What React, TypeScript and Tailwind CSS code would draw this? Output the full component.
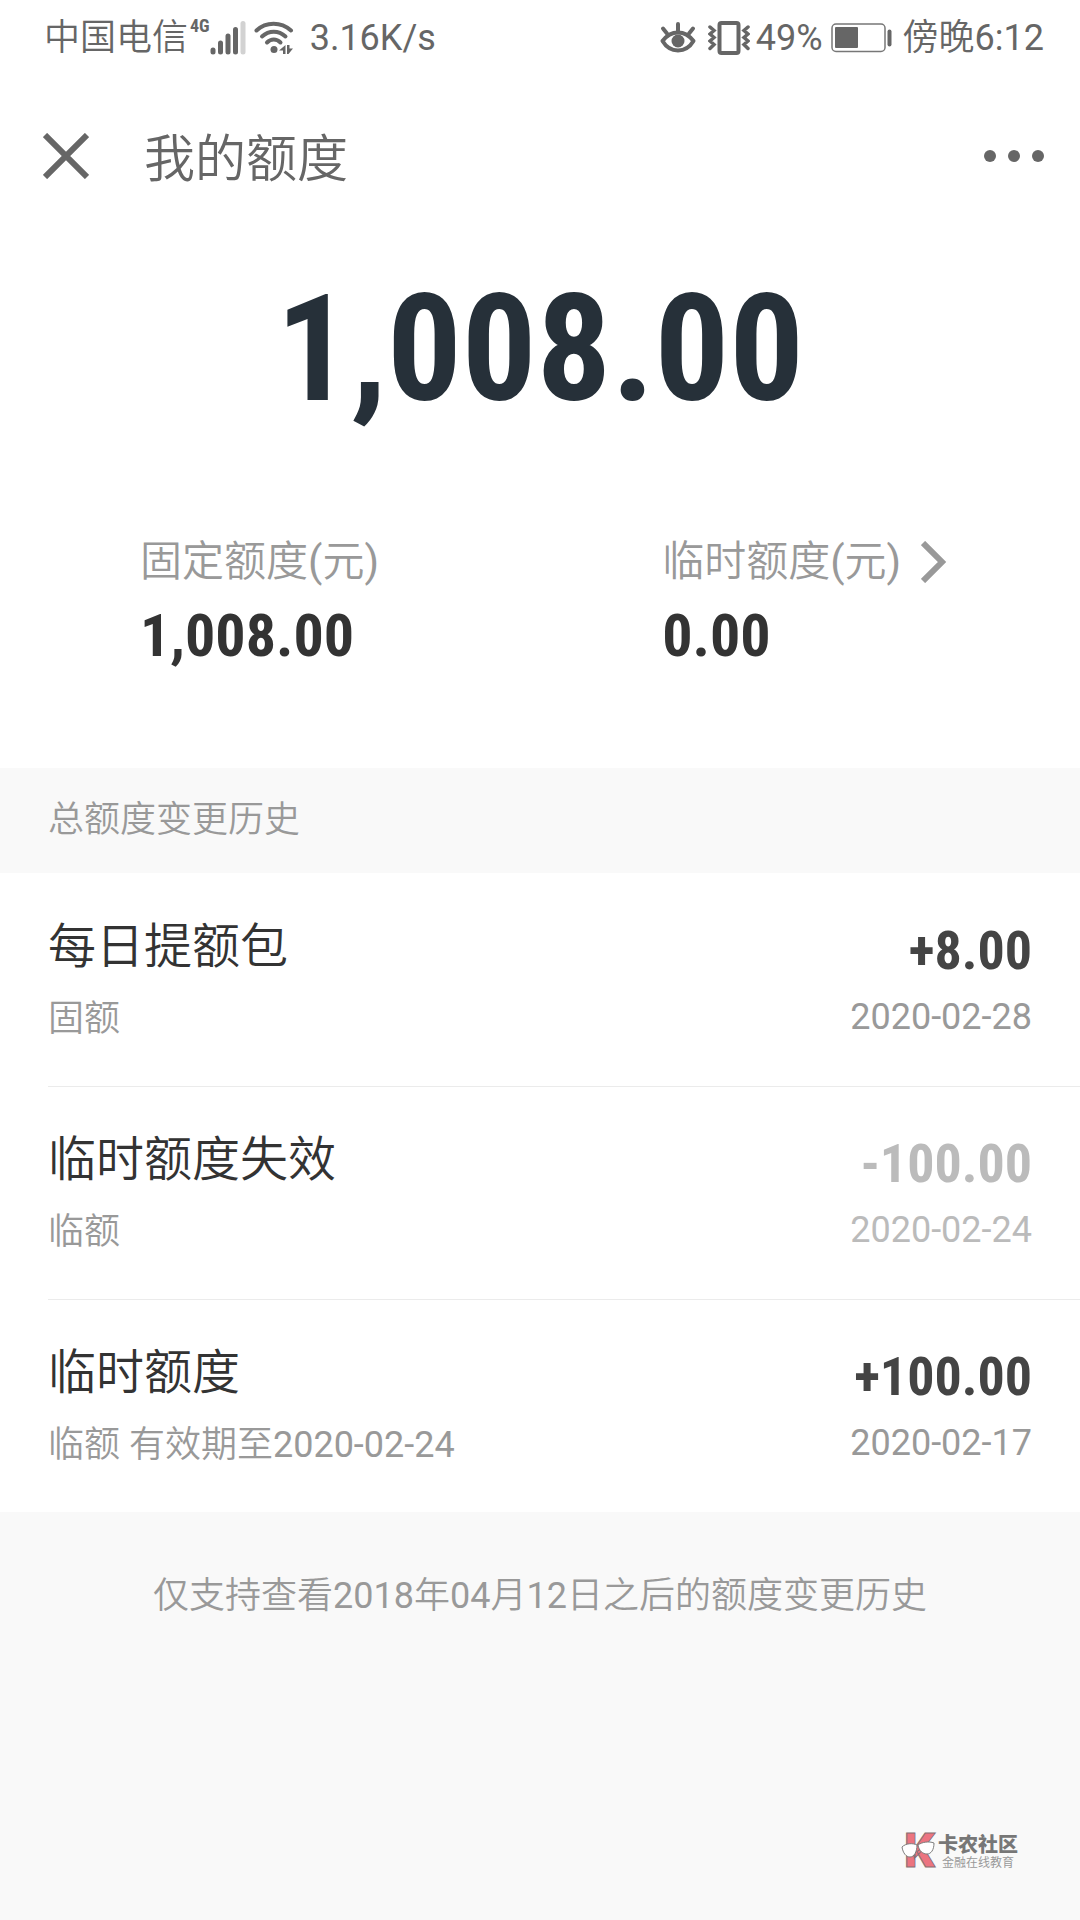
import React from 'react';

type Change = {
  title: string;
  note: string;
  amount: string;
  date: string;
  expired?: boolean;
};

const changes: Change[] = [
  { title: '每日提额包', note: '固额', amount: '+8.00', date: '2020-02-28' },
  { title: '临时额度失效', note: '临额', amount: '-100.00', date: '2020-02-24', expired: true },
  { title: '临时额度', note: '临额 有效期至2020-02-24', amount: '+100.00', date: '2020-02-17' },
];

const SignalIcon = () => (
  <svg className="h-[34px] w-[36px]" viewBox="0 0 36 34" strokeWidth={5} strokeLinecap="round" aria-hidden="true">
    <g stroke="#666666">
      <path d="M3 29v2" />
      <path d="M10.5 22v9" />
      <path d="M18 15v16" />
      <path d="M25.5 8.5v22.5" />
    </g>
    <path d="M33 2.5v28.5" stroke="#d2d2d2" />
  </svg>
);

const WifiIcon = () => (
  <svg className="h-[34px] w-[40px]" viewBox="0 0 40 34" fill="none" aria-hidden="true">
    <g stroke="#666666" strokeWidth={4} strokeLinecap="round">
      <path d="M2.5 9.5C12 .5 27 .5 37 9.5" />
      <path d="M8 15.5C15 9 24.5 9 31.5 15.5" />
      <path d="M13 21.5C17 17.5 22.5 17.5 26.5 21.5" />
    </g>
    <g fill="#666666">
      <circle cx="20" cy="28.5" r="3.5" />
      <path d="M31.5 24v9H29v-3.5h-4z" />
      <path d="M33 24v9h1.5l4.500-5.500h-3.500V24z" />
    </g>
  </svg>
);

const EyeIcon = () => (
  <svg className="h-[34px] w-[36px]" viewBox="0 0 36 34" fill="none" stroke="#666666" strokeLinecap="round" aria-hidden="true">
    <path d="M2.5 20C11 8.5 25 8.5 33.5 20C26 32.5 10 32.5 2.5 20z" strokeWidth={4} strokeLinejoin="round" />
    <path d="M18 3v7M3 7.5l4 5M33 7.5l-4 5" strokeWidth={4} />
    <circle cx="18" cy="20" r="6.5" fill="#666666" stroke="none" />
  </svg>
);

const VibrateIcon = () => (
  <svg className="h-[34px] w-[42px]" viewBox="0 0 42 34" fill="none" stroke="#666666" aria-hidden="true">
    <rect x="11.5" y="2" width="19" height="30" rx="2" strokeWidth={4} />
    <path
      d="M2 6l4 3.5-4 3.5 4 3.5-4 3.5 4 3.5-4 4M40 6l-4 3.5 4 3.5-4 3.5 4 3.5-4 3.5 4 4"
      strokeWidth={3.5}
      strokeLinecap="round"
    />
  </svg>
);

const BatteryIcon = () => (
  <svg className="h-[30px] w-[62px]" viewBox="0 0 62 30" aria-hidden="true">
    <rect x="1" y="1" width="53" height="27.5" rx="4" fill="none" stroke="#777777" strokeWidth={1.5} />
    <rect x="4" y="4" width="23" height="21" rx="1" fill="#666666" />
    <rect x="56.5" y="6.5" width="4" height="17" rx="2" fill="#666666" />
  </svg>
);

const StatusBar = () => (
  <div className="flex h-[76px] items-center justify-between pr-9 pl-11 text-4xl text-[#666666]">
    <div className="flex items-center">
      <span>中国电信</span>
      <span className="ml-0.5 self-start font-['Roboto_Condensed',Roboto,sans-serif] text-lg leading-4 font-bold">4G</span>
      <SignalIcon />
      <span className="mr-4 ml-2">
        <WifiIcon />
      </span>
      <span>3.16K/s</span>
    </div>
    <div className="flex items-center">
      <EyeIcon />
      <span className="mr-1.5 ml-3">
        <VibrateIcon />
      </span>
      <span>49%</span>
      <span className="mr-2.5 ml-2">
        <BatteryIcon />
      </span>
      <span>傍晚6:12</span>
    </div>
  </div>
);

const Watermark = () => (
  <div className="flex items-center font-['Noto_Sans_CJK_SC',sans-serif] text-[#999999]">
    <svg className="h-[60px] w-[37px]" viewBox="0 0 37 60" aria-hidden="true">
      <text x="3" y="47" fontFamily="Roboto, sans-serif" fontWeight="900" fontSize="48" fill="#ec7480" stroke="#857073" strokeWidth="1">
        K
      </text>
      <g fill="#ffffff" stroke="#7d7d7d" strokeWidth="1">
        <path d="M1 27c4-4 11-4 15-2 0 7-3 12-7 12s-7-4-8-10z" />
        <path d="M17 25c4-3 11-4 16-2 0 7-3 11-7 11s-8-3-9-9z" />
      </g>
    </svg>
    <div>
      <p className="text-xl leading-6 font-black text-[#777777]">卡农社区</p>
      <p className="pl-1 text-xs leading-3">金融在线教育</p>
    </div>
  </div>
);

const App: React.FC = () => {
  return (
    <div className="flex min-h-screen flex-col bg-[#f9f9f9] font-[Roboto,'Noto_Sans_CJK_SC_DemiLight','Noto_Sans_CJK_SC',sans-serif]">
      <div className="bg-white">
        <StatusBar />

        {/* Title bar */}
        <header className="flex h-40 items-center justify-between pr-9 pl-[43px] text-[#666666]">
          <div className="flex items-center">
            <button type="button" aria-label="关闭">
              <svg className="size-[46px]" viewBox="0 0 46 46" stroke="currentColor" strokeWidth={6}>
                <path d="M2 2l42 42M44 2L2 44" />
              </svg>
            </button>
            <h1 className="ml-[55px] pt-2 text-[51px] leading-[60px]">我的额度</h1>
          </div>
          <button type="button" aria-label="更多">
            <svg className="h-3 w-[60px]" viewBox="0 0 60 12" fill="currentColor">
              <circle cx="6" cy="6" r="6" />
              <circle cx="30" cy="6" r="6" />
              <circle cx="54" cy="6" r="6" />
            </svg>
          </button>
        </header>

        {/* Total limit */}
        <p className="pt-[34px] text-center font-['Roboto_Condensed',Roboto,sans-serif] text-[148px] leading-[160px] font-bold text-[#263039]">
          1,008.00
        </p>

        <div className="grid grid-cols-[5fr_4fr] pt-[106px] pb-[100px] pl-[140px]">
          <div>
            <p className="text-[42px] leading-[52px] text-[#999999]">固定额度(元)</p>
            <p className="mt-4 font-['Roboto_Condensed',Roboto,sans-serif] text-[60px] leading-[64px] font-bold text-[#333333]">
              1,008.00
            </p>
          </div>
          <div>
            <a href="#temporary" className="flex items-center text-[42px] leading-[52px] text-[#999999]">
              临时额度(元)
              <svg className="ml-5 h-[42px] w-[26px]" viewBox="0 0 26 42" fill="none" stroke="currentColor" strokeWidth={6}>
                <path d="M2 2l19 19L2 40" />
              </svg>
            </a>
            <p className="mt-4 font-['Roboto_Condensed',Roboto,sans-serif] text-[60px] leading-[64px] font-bold text-[#333333]">
              0.00
            </p>
          </div>
        </div>
      </div>

      <h2 className="px-12 py-7 text-4xl leading-[49px] text-[#999999]">总额度变更历史</h2>

      {/* Change history */}
      <ul className="bg-white pt-px pl-12">
        {changes.map((item) => (
          <li
            key={item.date}
            className="flex justify-between border-b border-[#ebebeb] pt-[43px] pr-12 pb-[43px] last:border-b-0"
          >
            <div>
              <p className="text-5xl leading-[60px] text-[#333333]">{item.title}</p>
              <p className="mt-[18px] text-4xl leading-[48px] text-[#999999]">{item.note}</p>
            </div>
            <div className={`text-right ${item.expired ? 'text-[#bbbbbb]' : 'text-[#999999]'}`}>
              <p
                className={`font-['Roboto_Condensed',Roboto,sans-serif] text-[54px] leading-[68px] font-bold ${
                  item.expired ? '' : 'text-[#444444]'
                }`}
              >
                {item.amount}
              </p>
              <p className="mt-2 text-4xl leading-[48px]">{item.date}</p>
            </div>
          </li>
        ))}
      </ul>

      <p className="pt-[60px] text-center text-4xl leading-[48px] text-[#999999]">
        仅支持查看2018年04月12日之后的额度变更历史
      </p>

      <footer className="mt-auto flex justify-end pr-[62px] pb-10">
        <Watermark />
      </footer>
    </div>
  );
};

export default App;
